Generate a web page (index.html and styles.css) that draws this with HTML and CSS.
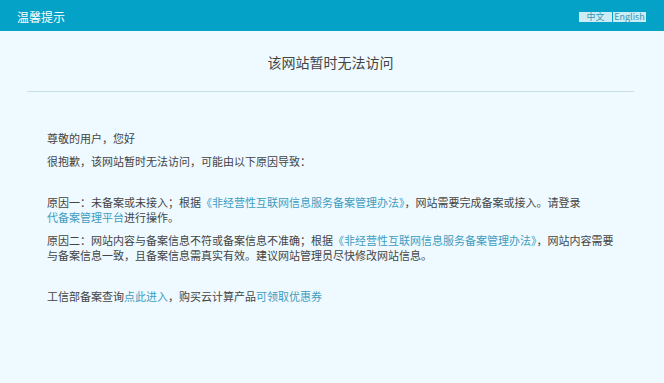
FILE: index.html
```html
<!DOCTYPE html>
<html lang="zh-CN">
<head>
  <meta charset="UTF-8">
  <meta name="viewport" content="width=device-width, initial-scale=1.0">
  <title>温馨提示</title>
  <link rel="stylesheet" href="styles.css">
</head>
<body>
  <div class="header">
    <div class="logo">温馨提示</div>
    <div class="lang">
      <a class="lang-item" href="#">中文</a>
      <a class="lang-item" href="#">English</a>
    </div>
  </div>

  <div class="main">
    <h1 class="title">该网站暂时无法访问</h1>
    <div class="content">
      <div class="group">
        <p>尊敬的用户，您好</p>
        <p>很抱歉，该网站暂时无法访问，可能由以下原因导致：</p>
      </div>
      <div class="group">
        <p>原因一：未备案或未接入；根据<a href="#">《非经营性互联网信息服务备案管理办法》</a>，网站需要完成备案或接入。请登录<br><a href="#">代备案管理平台</a>进行操作。</p>
        <p>原因二：网站内容与备案信息不符或备案信息不准确；根据<a href="#">《非经营性互联网信息服务备案管理办法》</a>，网站内容需要<br>与备案信息一致，且备案信息需真实有效。建议网站管理员尽快修改网站信息。</p>
      </div>
      <div class="group">
        <p>工信部备案查询<a href="#">点此进入</a>，购买云计算产品<a href="#">可领取优惠券</a></p>
      </div>
    </div>
  </div>
</body>
</html>
```

FILE: styles.css
```css
body {
  margin: 0;
  background: #eefaff;
  font-family: "Noto Sans CJK SC", "Liberation Sans", sans-serif;
  color: #444;
}
a {
  color: #3e9cbf;
  text-decoration: none;
}
.header {
  height: 31px;
  background: #04a2c7;
  display: flex;
  align-items: center;
  justify-content: space-between;
  padding: 0 18px 0 17px;
  box-sizing: border-box;
}
.logo {
  color: #fff;
  font-size: 12px;
  line-height: 14px;
  padding-top: 3px;
}
.lang {
  display: flex;
  gap: 1px;
  padding-top: 2px;
}
.lang-item {
  background: #cdecf4;
  color: #3a98b6;
  font-size: 9px;
  line-height: 10px;
  height: 10px;
  width: 33px;
  text-align: center;
}
.main {
  margin: 0 30px 0 27px;
}
.title {
  margin: 0;
  font-size: 14px;
  font-weight: normal;
  text-align: center;
  color: #444;
  line-height: 18px;
  padding: 22px 0 20px;
  border-bottom: 1px solid #c9dfe7;
}
.content {
  padding: 39px 0 0 20px;
  font-size: 11px;
  line-height: 15px;
}
.group {
  display: flex;
  flex-direction: column;
  gap: 8px;
  margin-bottom: 26px;
}
.group p {
  margin: 0;
  white-space: nowrap;
}
```
